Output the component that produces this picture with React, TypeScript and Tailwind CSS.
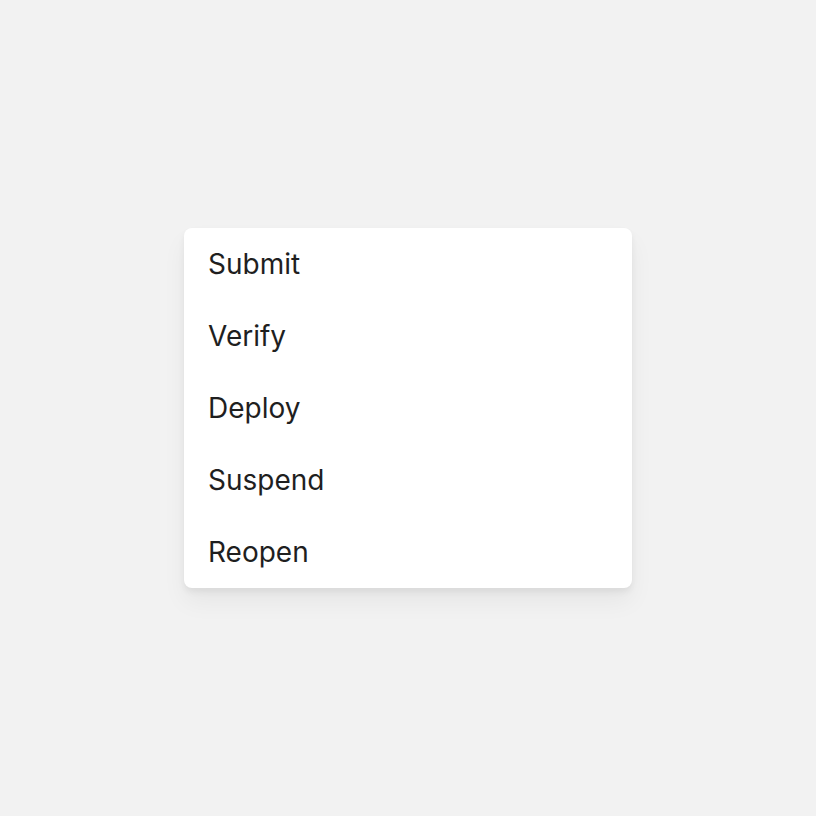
const items = ["Submit", "Verify", "Deploy", "Suspend", "Reopen"];

export default function App() {
  return (
    <div
      className="flex h-[816px] w-[816px] items-center justify-center bg-[#f2f2f2]"
      style={{ fontFamily: "Inter, 'Noto Sans', sans-serif" }}
    >
      <ul className="w-[448px] rounded-lg bg-white shadow-[0_14px_24px_rgba(0,0,0,0.05),0_4px_6px_rgba(0,0,0,0.06)]">
        {items.map((item) => (
          <li
            key={item}
            className="flex h-[72px] items-center px-6 text-[28px] text-[#1f1f1f]"
          >
            {item}
          </li>
        ))}
      </ul>
    </div>
  );
}
